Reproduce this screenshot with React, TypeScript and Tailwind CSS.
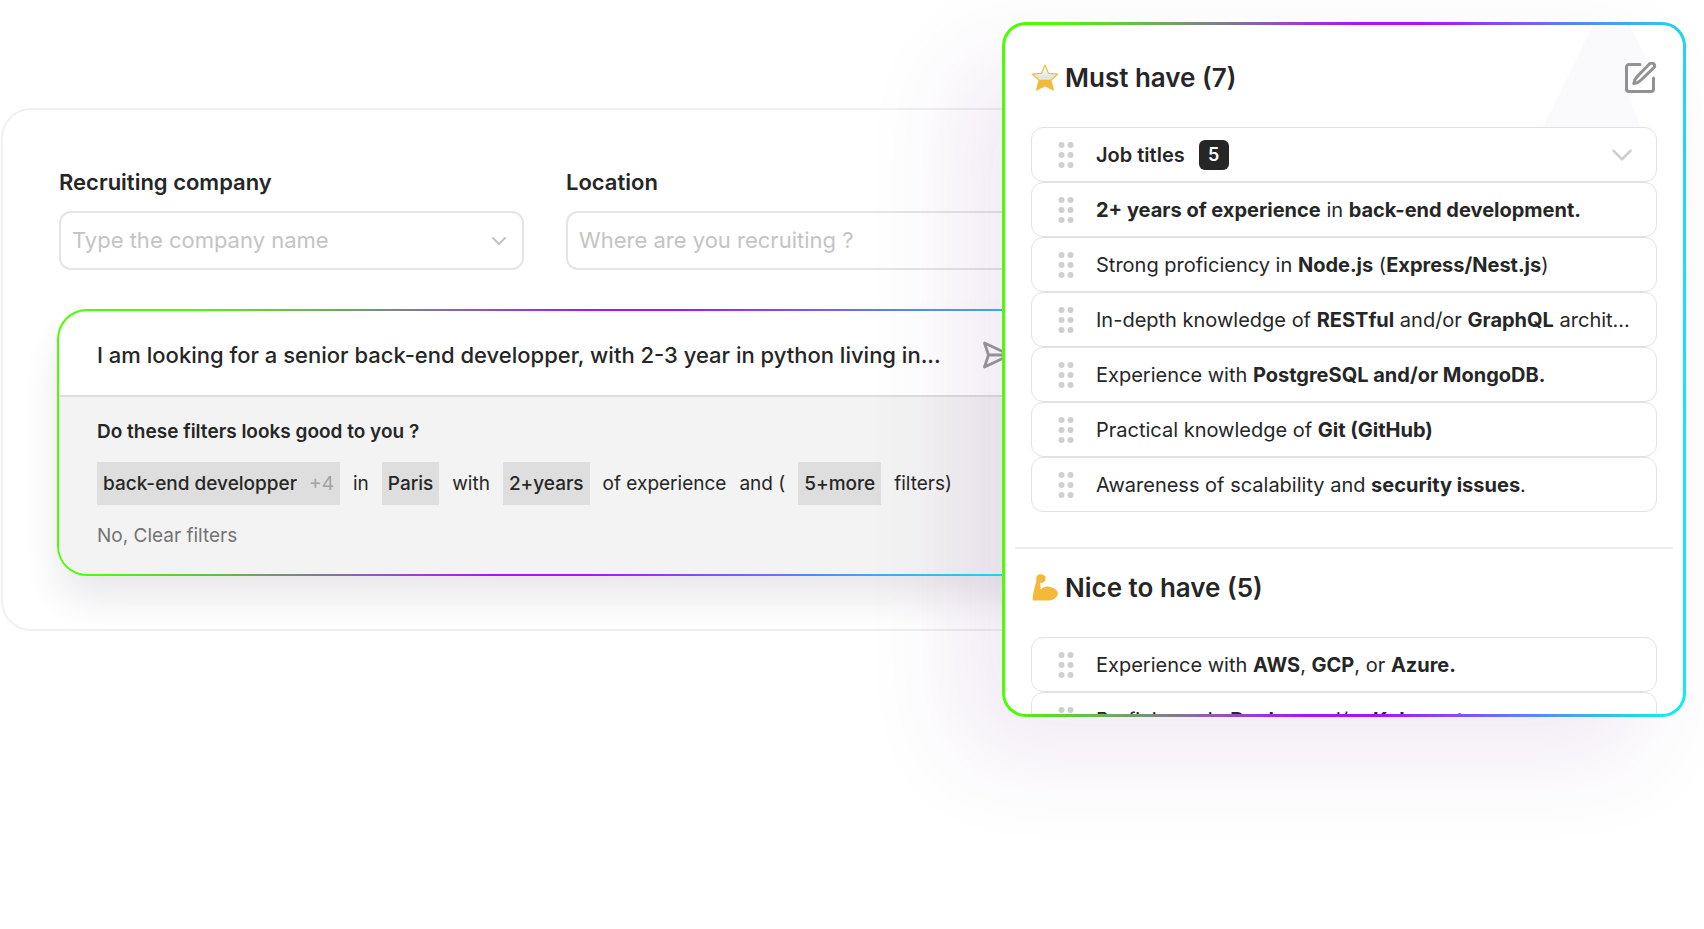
import type { ReactNode } from "react";
import { ChevronDown } from "lucide-react";

function Grip() {
  return (
    <svg width="16" height="28" viewBox="0 0 16 28" fill="#cfcfcf" aria-hidden="true" className="shrink-0">
      {[4, 14, 24].map((y) => (
        <g key={y}>
          <circle cx="3.5" cy={y} r="3" />
          <circle cx="12.5" cy={y} r="3" />
        </g>
      ))}
    </svg>
  );
}

function Star() {
  return (
    <svg width="28" height="28" viewBox="0 0 28 28" aria-hidden="true">
      <defs>
        <linearGradient id="star" x1="0" y1="0" x2="0" y2="1">
          <stop offset="0.1" stopColor="#fdfdfd" />
          <stop offset="0.5" stopColor="#e2e2e2" />
          <stop offset="0.56" stopColor="#dff0c0" />
          <stop offset="0.62" stopColor="#f3b93a" />
        </linearGradient>
      </defs>
      <path
        d="M14 1.2 17.6 9.4 26.8 10 19.8 16.4 22.4 26 14 21.6 5.6 26 8.2 16.4 1.2 10 10.4 9.4Z"
        fill="url(#star)"
        stroke="#f3b93a"
        strokeWidth="1.2"
        strokeLinejoin="round"
      />
    </svg>
  );
}

function Biceps() {
  return (
    <svg width="28" height="28" viewBox="0 0 28 28" aria-hidden="true">
      <path
        d="M7.2 .8C9.6-.2 13 .4 14.200 2.600c1 2.200.2 5-2 6-.8.4-1.400.4-2 .3L10 15.400C11.800 13.200 13.800 12.400 16.400 12.400c5.200.2 10.400 3.200 10.400 7 0 4-4.800 7-10.400 7.200H2.400C1.200 26.600 1.800 22.500 2.400 19 3.200 14.500 4.400 10.500 5.400 7 4.800 4.800 5.400 1.800 7.2 .8Z"
        fill="#f3b93a"
      />
      <path d="M9.800 8.600 9.900 15.200" stroke="#fff6e0" strokeWidth="1" />
    </svg>
  );
}

function Send() {
  return (
    <svg width="30" height="30" viewBox="0 0 30 30" fill="none" stroke="#999" strokeWidth="2.8" strokeLinejoin="round" strokeLinecap="round" aria-hidden="true">
      <path d="M2.5 3 28 15 2.5 27 6.5 15ZM6.5 15H28" />
    </svg>
  );
}

function Edit() {
  return (
    <svg width="32" height="32" viewBox="2 2 32 32" fill="none" stroke="#929292" strokeWidth="3" strokeLinejoin="round" strokeLinecap="round" aria-hidden="true">
      <path d="M17 4.5H6A2.500 2.500 0 0 0 3.500 7V29A2.500 2.500 0 0 0 6 31.500H28A2.500 2.500 0 0 0 30.500 29V18" />
      <path d="M26.600 3.800a2.900 2.900 0 0 1 4.100 4.100L17.500 20.500c-1.600 1.600-3.600 2.800-6.700 3.100.3-3.100 1.500-5.100 3.100-6.700Z" />
    </svg>
  );
}

function Row({ children, end }: { children: ReactNode; end?: ReactNode }) {
  return (
    <li className="flex h-[55px] items-center gap-[22px] rounded-xl border border-[#e2e2e4] bg-white pl-[26px] pr-[17px]">
      <Grip />
      <p className="min-w-0 flex-1 truncate">{children}</p>
      {end}
    </li>
  );
}

function Chip({ children }: { children: ReactNode }) {
  return (
    <button type="button" className="flex h-[43px] items-center gap-3 bg-[#dedede] px-1.5 font-medium">
      {children}
    </button>
  );
}

export default function App() {
  return (
    <main className="flex min-h-screen items-start overflow-hidden bg-white pr-[18px] font-['Inter',sans-serif] text-[#262626]">
      <section className="ml-px mt-[108px] min-w-0 flex-1 pb-4">
        <div className="-mr-24 rounded-[30px] border-2 border-[#f0f0f0] pb-[53px] pl-[54px] pt-[58px]">
          <form className="flex gap-[42px] pl-0.5">
            <div className="w-[465px] shrink-0">
              <label htmlFor="company" className="block text-[22px] font-semibold leading-7">
                Recruiting company
              </label>
              <div className="mt-[15px] flex h-[59px] items-center rounded-xl border-2 border-[#e5e5e5] px-[11px]">
                <input id="company" placeholder="Type the company name" className="min-w-0 flex-1 text-[22px] outline-none placeholder:text-[#c4c4c4]" />
                <ChevronDown size={24} color="#c4c4c4" />
              </div>
            </div>
            <div className="min-w-0 flex-1">
              <label htmlFor="location" className="block text-[22px] font-semibold leading-7">
                Location
              </label>
              <div className="mt-[15px] flex h-[59px] items-center rounded-l-xl border-2 border-r-0 border-[#e5e5e5] pl-[11px]">
                <input id="location" placeholder="Where are you recruiting ?" className="min-w-0 flex-1 text-[22px] outline-none placeholder:text-[#c4c4c4]" />
              </div>
            </div>
          </form>

          <div className="mt-[39px] rounded-[30px] bg-[linear-gradient(110deg,#4cff00_12%,#a914ff_47%,#a914ff_55%,#14e8f0_92%)] p-0.5 shadow-[0_24px_40px_-4px_#2814301c]">
            <div className="overflow-hidden rounded-[28px] bg-white">
              <div className="flex h-[86px] items-center justify-between border-b-2 border-[#dddddd] pl-[38px] pr-[82px] pt-1">
                <p className="whitespace-nowrap text-[22px] font-medium">I am looking for a senior back-end developper, with 2-3 year in python living in...</p>
                <button type="button" aria-label="Send">
                  <Send />
                </button>
              </div>
              <div className="bg-[#f3f3f3] pb-6 pl-[38px] pt-[21px] text-[19px] leading-7">
                <p className="font-semibold">Do these filters looks good to you ?</p>
                <div className="mt-4 flex items-center gap-[13px] whitespace-nowrap">
                  <Chip>
                    back-end developper <span className="font-normal text-[#a3a3a3]">+4</span>
                  </Chip>
                  <span>in</span>
                  <Chip>Paris</Chip>
                  <span>with</span>
                  <Chip>2+years</Chip>
                  <span>of experience</span>
                  <span>and (</span>
                  <Chip>5+more</Chip>
                  <span>filters)</span>
                </div>
                <button type="button" className="mt-[17px] block text-[#737373]">
                  No, Clear filters
                </button>
              </div>
            </div>
          </div>
        </div>
      </section>

      <aside className="relative mt-[22px] w-[684px] shrink-0 rounded-[24px] bg-[linear-gradient(94deg,#4cff00_7%,#a914ff_48%,#a914ff_58%,#14e8f0_97%)] p-[3px] shadow-[-44px_40px_100px_0_#60107a16]">
        <div className="relative h-[689px] overflow-hidden rounded-[21px] bg-white text-[20px] leading-7">
          <svg width="110" height="110" viewBox="0 0 110 110" className="absolute right-[35px] top-0" aria-hidden="true">
            <path d="M55 0H92L109 36 91 72 104 104H4Z" fill="#fafafc" />
          </svg>
          <div className="relative px-[26px] pt-[35px]">
            <header className="flex h-9 items-center gap-1.5">
              <Star />
              <h2 className="flex-1 text-[26px] font-semibold">Must have (7)</h2>
              <button type="button" aria-label="Edit">
                <Edit />
              </button>
            </header>
            <ul className="mt-[31px]">
              <Row end={<ChevronDown size={34} strokeWidth={1.75} color="#cfcfcf" />}>
                <span className="flex items-center gap-3.5 font-semibold">
                  Job titles
                  <span className="flex size-[30px] items-center justify-center rounded-md bg-[#262626] text-[18px] text-white">5</span>
                </span>
              </Row>
              <Row>
                <b>2+ years of experience</b> in <b>back-end development.</b>
              </Row>
              <Row>
                Strong proficiency in <b>Node.js</b> (<b>Express/Nest.js</b>)
              </Row>
              <Row>
                In-depth knowledge of <b>RESTful</b> and/or <b>GraphQL</b> archit...
              </Row>
              <Row>
                Experience with <b>PostgreSQL and/or MongoDB.</b>
              </Row>
              <Row>
                Practical knowledge of <b>Git (GitHub)</b>
              </Row>
              <Row>
                Awareness of scalability and <b>security issues</b>.
              </Row>
            </ul>
          </div>
          <hr className="mx-2.5 mt-[35px] border-t-2 border-[#ececec]" />
          <div className="px-[26px] pt-[21px]">
            <header className="flex h-9 items-center gap-1.5">
              <Biceps />
              <h2 className="text-[26px] font-semibold">Nice to have (5)</h2>
            </header>
            <ul className="mt-[31px]">
              <Row>
                Experience with <b>AWS</b>, <b>GCP</b>, or <b>Azure.</b>
              </Row>
              <Row>
                Proficiency in <b>Docker</b> and/or <b>Kubernetes.</b>
              </Row>
            </ul>
          </div>
        </div>
      </aside>
    </main>
  );
}
